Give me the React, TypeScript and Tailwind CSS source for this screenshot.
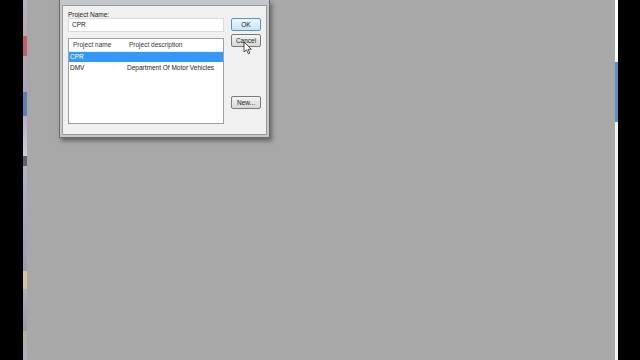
import React from "react";

function Cursor() {
  return (
    <svg width="10" height="14" viewBox="0 0 10 14" className="absolute left-[243px] top-[41px]">
      <path d="M1 1 L1 11 L3.5 8.8 L5.3 12.8 L6.8 12.1 L5.1 8.3 L8.3 8.3 Z" fill="#ffffff" stroke="#222" strokeWidth="0.8" strokeLinejoin="round" />
    </svg>
  );
}

function Btn({ label, primary }: { label: string; primary?: boolean }) {
  return (
    <div
      className={`w-[30px] h-[13px] rounded-[2px] border flex items-center justify-center text-[6.5px] text-[#222] ${
        primary
          ? "border-[#5a93c0] bg-gradient-to-b from-[#eef7fd] to-[#c6e4f6]"
          : "border-[#7a7a7a] bg-gradient-to-b from-[#f4f4f4] to-[#d8d8d8]"
      }`}
    >
      {label}
    </div>
  );
}

export default function App() {
  return (
    <div
      className="w-[640px] h-[360px] flex bg-black overflow-hidden"
      style={{ fontFamily: "'Liberation Sans', Arial, sans-serif" }}
    >
      <div className="w-[23px] h-full bg-black" />
      <div className="w-[4px] h-full flex flex-col bg-[#9a9aa6]">
        <div className="h-[36px] bg-gradient-to-b from-[#b5b5bf] to-[#b8a8b0]" />
        <div className="h-[20px] bg-[#c06060]" />
        <div className="h-[36px] bg-gradient-to-b from-[#b8a8b0] to-[#a8a8b8]" />
        <div className="h-[24px] bg-[#5a80b8]" />
        <div className="h-[40px] bg-gradient-to-b from-[#b0b0c8] to-[#d0ccd6]" />
        <div className="h-[10px] bg-[#606068]" />
        <div className="h-[105px] bg-gradient-to-b from-[#b0b4c4] to-[#9c9cb0]" />
        <div className="h-[18px] bg-[#d0c898]" />
        <div className="h-[42px] bg-gradient-to-b from-[#b0b0b8] to-[#9a9aa8]" />
        <div className="h-[14px] bg-[#a0b8a8]" />
        <div className="flex-1 bg-[#b0b0bc]" />
      </div>
      <div className="flex-1 h-full bg-[#a8a8a8] relative">
        <div className="absolute left-[32px] top-0 w-[211px] h-[140px]">
          <div className="w-[211px] h-[138px] bg-[#c4c8cc] border border-[#6a6a6a] border-t-0 shadow-[2px_3px_4px_rgba(60,60,60,0.6)] px-[2px] pb-[2px] pt-[5px]">
            <div className="w-full h-full bg-[#f0f0f0] border border-[#9a9a9a] relative">
              <div className="absolute left-[5px] top-[6px] text-[6.5px] text-[#222] leading-none whitespace-nowrap">Project Name:</div>
              <div className="absolute left-[5px] top-[12px] w-[156px] h-[14px] bg-white border border-[#d8dce0] flex items-center pl-[3px] text-[6.5px] text-[#222]">
                CPR
              </div>
              <div className="absolute left-[5px] top-[32px] w-[156px] h-[86px] bg-white border border-[#a0a0a0]">
                <div className="h-[13px] flex items-center text-[6.5px] text-[#333] border-b border-[#ececec] whitespace-nowrap">
                  <span className="w-[60px] pl-[4px] shrink-0">Project name</span>
                  <span>Project description</span>
                </div>
                <div className="h-[10px] bg-[#3399ff] flex items-center text-[6.5px] text-white">
                  <span className="pl-[1px]">CPR</span>
                </div>
                <div className="h-[11px] flex items-center text-[6.5px] text-[#222] whitespace-nowrap">
                  <span className="w-[58px] pl-[1px] shrink-0">DMV</span>
                  <span>Department Of Motor Vehicles</span>
                </div>
              </div>
              <div className="absolute left-[168px] top-[12px] flex flex-col gap-[3px]">
                <Btn label="OK" primary />
                <Btn label="Cancel" />
              </div>
              <div className="absolute left-[168px] top-[90px]">
                <Btn label="New..." />
              </div>
            </div>
          </div>
        </div>
        <div className="absolute -left-[27px] top-0">
          <Cursor />
        </div>
      </div>
      <div className="w-[3px] h-full flex flex-col bg-white">
        <div className="h-[62px] bg-white" />
        <div className="h-[60px] bg-[#5a90c4]" />
        <div className="flex-1 bg-[#f4f4f4]" />
      </div>
      <div className="w-[22px] h-full bg-black" />
    </div>
  );
}
